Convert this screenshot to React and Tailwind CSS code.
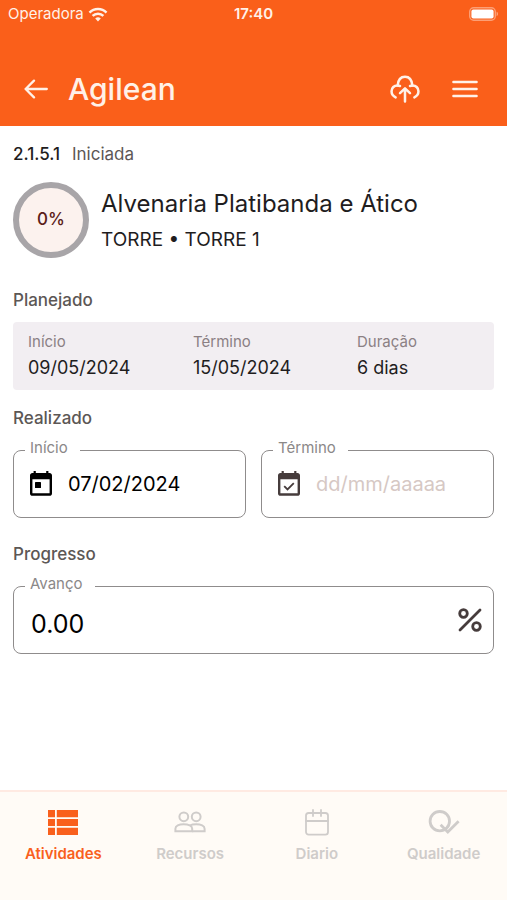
import { useState } from "react"

const plannedDates = [
  { label: "Início", value: "09/05/2024" },
  { label: "Término", value: "15/05/2024" },
  { label: "Duração", value: "6 dias" },
]

function WifiIcon() {
  return (
    <svg viewBox="0 0 20 15" className="h-[15px] w-5" fill="none" stroke="currentColor" strokeWidth="2.5">
      <path d="M1.5 5.6a12 12 0 0 1 17 0" />
      <path d="M4.6 8.9a7.6 7.6 0 0 1 10.8 0" />
      <path d="M10 14.4 7.2 11.6a4 4 0 0 1 5.6 0z" fill="currentColor" stroke="none" />
    </svg>
  )
}

function BatteryIcon() {
  return (
    <svg viewBox="0 0 30 14" className="h-[14px] w-[30px]" fill="none">
      <rect x="0.7" y="0.7" width="25.6" height="12.6" rx="4" stroke="#fff" strokeOpacity="0.4" strokeWidth="1.4" />
      <rect x="2.4" y="2.4" width="22.2" height="9.2" rx="2" fill="#fff" />
      <path d="M27.6 4.8c1.8.6 1.8 3.8 0 4.4z" fill="#fff" fillOpacity="0.45" />
    </svg>
  )
}

function BackIcon() {
  return (
    <svg viewBox="0 0 24 20" className="h-5 w-6" fill="none" stroke="currentColor" strokeWidth="2.3" strokeLinecap="round" strokeLinejoin="round">
      <path d="M22.8 10H1.6M10 1.6 1.6 10l8.4 8.4" />
    </svg>
  )
}

function CloudUploadIcon() {
  return (
    <svg viewBox="0 0 30 28" className="h-7 w-[30px]" fill="none" stroke="currentColor" strokeWidth="2.5" strokeLinecap="round" strokeLinejoin="round">
      <path d="M5.6 22.4C2.8 21 1.4 18.6 1.6 16c.3-3.4 2.9-5.4 6-5.5C8.1 5 10.8 1.7 15 1.7s6.9 3.3 7.4 8.8c3.1.1 5.7 2.1 6 5.5.2 2.6-1.2 5-4 6.4" />
      <path d="M15 26.6V13.8M10 18.2l5-4.9 5 4.9" />
      <path d="M22.4 10.5l-2.4.5M7.6 10.5l2.4.5" />
    </svg>
  )
}

function MenuIcon() {
  return (
    <svg viewBox="0 0 26 18" className="h-[18px] w-[26px]" fill="none" stroke="currentColor" strokeWidth="2.4" strokeLinecap="round">
      <path d="M1.4 2h23.2M1.4 9h23.2M1.4 16h23.2" />
    </svg>
  )
}

function CalendarDayIcon() {
  return (
    <svg viewBox="0 0 22 25" className="h-[25px] w-[22px]">
      <path
        fill="currentColor"
        fillRule="evenodd"
        d="M3.6 0h2.2v2h10.4V0h2.2v2h1.2C20.9 2 22 3.1 22 4.4v18c0 1.3-1.1 2.4-2.4 2.4H2.4C1.1 24.8 0 23.7 0 22.4v-18C0 3.1 1.1 2 2.4 2h1.2zM2.4 8.2v14h17.2v-14z"
      />
      <rect x="5" y="11" width="6" height="6" rx="0.6" fill="currentColor" />
    </svg>
  )
}

function CalendarCheckIcon() {
  return (
    <svg viewBox="0 0 22 25" className="h-[25px] w-[22px]">
      <path
        fill="currentColor"
        fillRule="evenodd"
        d="M3.6 0h2.2v2h10.4V0h2.2v2h1.2C20.9 2 22 3.1 22 4.4v18c0 1.3-1.1 2.4-2.4 2.4H2.4C1.1 24.8 0 23.7 0 22.4v-18C0 3.1 1.1 2 2.4 2h1.2zM2.4 8.2v14h17.2v-14z"
      />
      <path d="M6.2 15.2l3.3 3.3 6.3-6.3" fill="none" stroke="currentColor" strokeWidth="1.8" />
    </svg>
  )
}

function PercentIcon() {
  return (
    <svg viewBox="0 0 24 24" className="size-6" fill="none" stroke="currentColor" strokeWidth="2.8" strokeLinecap="round">
      <path d="M22 2 2 22" />
      <circle cx="5.5" cy="5.5" r="3.8" />
      <circle cx="18.5" cy="18.5" r="3.8" />
    </svg>
  )
}

function ActivitiesIcon() {
  return (
    <svg viewBox="0 0 30 25" className="h-[25px] w-[30px]" fill="currentColor">
      <path d="M0 0h7v7.2H0zM8.8 0H30v7.2H8.8zM0 9h7v7H0zM8.8 9H30v7H8.8zM0 17.8h7V25H0zM8.8 17.8H30V25H8.8z" />
    </svg>
  )
}

function PeopleIcon() {
  return (
    <svg viewBox="0 0 32 22" className="h-[22px] w-8" fill="none" stroke="currentColor" strokeWidth="2">
      <circle cx="9.8" cy="5.8" r="4.4" />
      <circle cx="22.2" cy="5.8" r="4.4" />
      <path d="M1.4 20.2v-2.4c0-2.9 3.6-4.6 8.2-4.6s8.6 1.7 8.6 4.6v2.4z" />
      <path d="M15.8 14.5c1.6-.9 3.9-1.3 6.4-1.3 4.7 0 8.4 1.7 8.4 4.6v2.4H18.2" />
    </svg>
  )
}

function DiaryIcon() {
  return (
    <svg viewBox="0 0 24 27" className="h-[27px] w-6" fill="none" stroke="currentColor" strokeWidth="1.8" strokeLinecap="round">
      <rect x="1" y="4" width="22" height="21.6" rx="2.6" />
      <path d="M1 12h22M8 1v6M16 1v6" />
    </svg>
  )
}

function QualityIcon() {
  return (
    <svg viewBox="0 0 32 24" className="h-6 w-8" fill="none" stroke="currentColor" strokeWidth="2.8">
      <circle cx="11.8" cy="11.2" r="9.7" />
      <path d="M12.6 14.8l7.2 7.2L30.6 11.2" />
    </svg>
  )
}

const tabs = [
  { name: "Atividades", Icon: ActivitiesIcon },
  { name: "Recursos", Icon: PeopleIcon },
  { name: "Diario", Icon: DiaryIcon },
  { name: "Qualidade", Icon: QualityIcon },
]

function OutlinedField({ id, label, children }) {
  return (
    <fieldset className="min-w-0 rounded-lg border border-[#8f8c8c] px-[11px]">
      <legend className="pl-[5px] pr-3 text-[15px] leading-5 text-[#8b8888]">
        <label htmlFor={id} className="block pb-1">{label}</label>
      </legend>
      <div className="flex h-[55px] items-center pb-3">{children}</div>
    </fieldset>
  )
}

function SectionTitle({ children }) {
  return <h2 className="text-[17px] leading-6 font-medium text-[#5c5755]">{children}</h2>
}

export default function App() {
  const [start, setStart] = useState("07/02/2024")
  const [end, setEnd] = useState("")
  const [progress, setProgress] = useState("0.00")
  const [activeTab, setActiveTab] = useState("Atividades")

  return (
    <div className="flex min-h-screen flex-col bg-white font-['Inter','Liberation_Sans',sans-serif] text-[#1f1d1e]">
      <header className="bg-[#fa5f1a] text-[#fff1e8]">
        <div className="grid h-7 grid-cols-3 items-center px-2 text-[15px] leading-5">
          <div className="flex items-center gap-1">
            <span>Operadora</span>
            <WifiIcon />
          </div>
          <span className="text-center font-semibold">17:40</span>
          <div className="flex justify-end">
            <BatteryIcon />
          </div>
        </div>
        <div className="flex items-center px-6 pt-[34px] pb-[10px]">
          <button type="button" aria-label="Voltar" className="flex">
            <BackIcon />
          </button>
          <span className="ml-5 text-[30px] leading-[54px] font-medium">Agilean</span>
          <button type="button" aria-label="Enviar" className="ml-auto flex">
            <CloudUploadIcon />
          </button>
          <button type="button" aria-label="Menu" className="ml-8 mr-[5px] flex">
            <MenuIcon />
          </button>
        </div>
      </header>

      <main className="flex-1 px-[13px] pt-4">
        <p className="flex gap-3 text-[17px] leading-6">
          <span className="font-medium">2.1.5.1</span>
          <span className="text-[#5c5755]">Iniciada</span>
        </p>

        <div className="mt-4 flex items-center gap-3">
          <div className="flex size-[76px] shrink-0 items-center justify-center rounded-full border-[6px] border-[#a8a5a8] bg-[#fcf2ee] text-[17px] font-medium text-[#5a2018]">
            0%
          </div>
          <div className="pt-1">
            <h1 className="text-2xl leading-9">Alvenaria Platibanda e Ático</h1>
            <p className="text-[19px] leading-9">TORRE • TORRE 1</p>
          </div>
        </div>

        <section className="mt-[30px]">
          <SectionTitle>Planejado</SectionTitle>
          <dl className="mt-[10px] grid grid-cols-[165fr_164fr_137fr] rounded bg-[#f2eef2] py-2 pl-[15px]">
            {plannedDates.map((item) => (
              <div key={item.label}>
                <dt className="text-[15px] leading-6 text-[#8b8084]">{item.label}</dt>
                <dd className="text-lg leading-7">{item.value}</dd>
              </div>
            ))}
          </dl>
        </section>

        <section className="mt-4">
          <SectionTitle>Realizado</SectionTitle>
          <div className="mt-2 grid grid-cols-2 gap-[15px]">
            <OutlinedField id="inicio" label="Início">
              <span className="ml-[5px] text-black"><CalendarDayIcon /></span>
              <input
                id="inicio"
                type="text"
                value={start}
                onChange={(e) => setStart(e.target.value)}
                className="ml-4 w-full min-w-0 text-xl leading-7 text-black outline-none"
              />
            </OutlinedField>
            <OutlinedField id="termino" label="Término">
              <span className="ml-[5px] text-[#463c3c]"><CalendarCheckIcon /></span>
              <input
                id="termino"
                type="text"
                value={end}
                placeholder="dd/mm/aaaaa"
                onChange={(e) => setEnd(e.target.value)}
                className="ml-4 w-full min-w-0 text-xl leading-7 text-black outline-none placeholder:text-[#d6c8c4]"
              />
            </OutlinedField>
          </div>
        </section>

        <section className="mt-6">
          <SectionTitle>Progresso</SectionTitle>
          <div className="mt-2">
            <OutlinedField id="avanco" label="Avanço">
              <input
                id="avanco"
                type="text"
                inputMode="decimal"
                value={progress}
                onChange={(e) => setProgress(e.target.value)}
                className="ml-[6px] w-full min-w-0 pt-2 text-[25px] leading-8 text-black outline-none"
              />
              <span className="text-[#463c3c]"><PercentIcon /></span>
            </OutlinedField>
          </div>
        </section>
      </main>

      <nav className="grid grid-cols-4 border-t-2 border-[#ffeae2] bg-[#fffbf6] pt-3 pb-9">
        {tabs.map(({ name, Icon }) => (
          <button
            key={name}
            type="button"
            onClick={() => setActiveTab(name)}
            className={`flex flex-col items-center gap-1 ${activeTab === name ? "text-[#f9601d]" : "text-[#cfccca]"}`}
          >
            <span className="flex h-9 items-center">
              <Icon />
            </span>
            <span className="text-[15px] leading-5 font-semibold">{name}</span>
          </button>
        ))}
      </nav>
    </div>
  )
}
